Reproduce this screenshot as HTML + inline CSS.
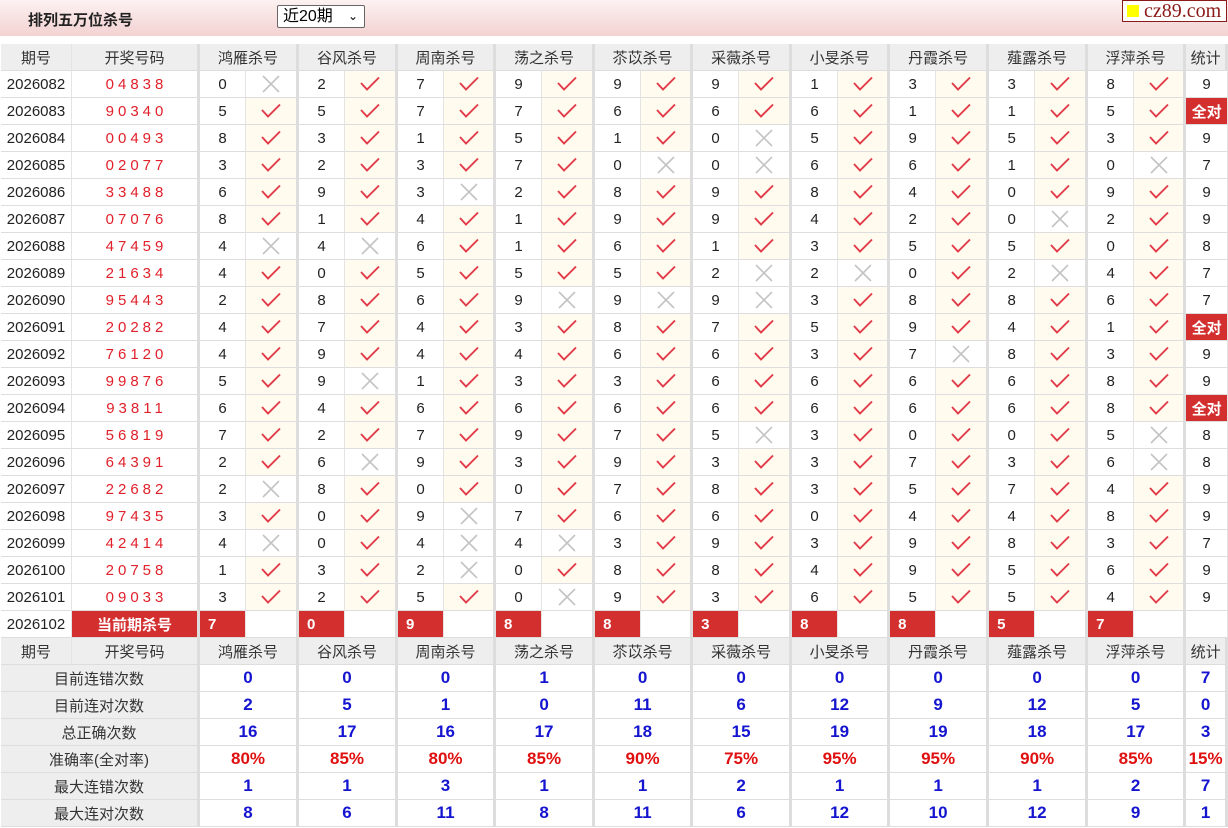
<!DOCTYPE html>
<html><head><meta charset="utf-8"><style>
body{margin:0;width:1228px;height:828px;overflow:hidden;background:#fff;font-family:"Liberation Sans","Noto Sans CJK SC",sans-serif;}
.hd{position:absolute;left:0;top:0;width:1228px;height:36px;background:linear-gradient(#fdf1f1,#f3d2d2);}
.tt{position:absolute;left:28px;top:9px;font-size:15px;font-weight:bold;color:#222;}
.sel{position:absolute;left:277px;top:5px;width:88px;height:23px;border:1px solid #666;border-radius:2px;background:#fff;font-size:16px;box-sizing:border-box;padding-left:5px;line-height:21px;}
.sel span{position:absolute;right:6px;top:0;font-size:12px;}
.logo{position:absolute;left:1122px;top:0;width:105px;height:22px;border:1px solid #8b1a1a;box-sizing:border-box;background:#fff;font-family:"Liberation Serif",serif;color:#8b1a1a;font-size:20px;line-height:20px;padding-left:21px;}
.logo i{position:absolute;left:4px;top:4px;width:12px;height:12px;background:#ff0;}
table{position:absolute;left:1px;top:44px;border-collapse:separate;border-spacing:0;table-layout:fixed;width:1227px;font-size:15px;color:#222;}
td{height:26px;border-bottom:1px solid #ddd;border-right:1px solid #e4e4e4;text-align:center;padding:0;white-space:nowrap;overflow:hidden;}
td:nth-child(even){border-right:3px solid #ddd;}
.h td{background:#eee;color:#333;}
td.d{color:#e0202a;letter-spacing:4px;padding-left:4px;}
td.c{background:#fffcef;}
svg{display:block;margin:auto;}
td.q{background:#d32f2f;color:#fff;font-weight:bold;}
td.rn{background:#d32f2f;color:#fff;font-weight:bold;text-align:left;padding-left:8px;}
td.t{background:#d32f2f;color:#fff;font-weight:bold;}
.st td{color:#1515d0;font-weight:bold;font-size:17px;border-right:3px solid #ddd;}
.st td.l{background:#eee;color:#333;font-weight:normal;font-size:15px;}
.st td.r{color:#e01010;}
.h2 td{border-right:3px solid #ddd;}
.h2 td.p{border-right:1px solid #e4e4e4;}
</style></head><body>
<svg width="0" height="0" style="position:absolute"><defs>
<symbol id="k" viewBox="0 0 22 18"><polyline points="2,8 8,14.5 20,2.5" fill="none" stroke="#e23a48" stroke-width="1.9"/></symbol>
<symbol id="x" viewBox="0 0 18 18"><path d="M1,1L17,17M17,1L1,17" stroke="#c4c4c4" stroke-width="1.6"/></symbol>
</defs></svg>
<div class="hd"><div class="tt">排列五万位杀号</div><div class="sel">近20期<span>&#8964;</span></div><div class="logo"><i></i>cz89.com</div></div>
<table>
<colgroup><col style="width:71px"><col style="width:128px"><col style="width:46px"><col style="width:53px"><col style="width:46px"><col style="width:53px"><col style="width:46px"><col style="width:52px"><col style="width:46px"><col style="width:53px"><col style="width:46px"><col style="width:52px"><col style="width:46px"><col style="width:53px"><col style="width:46px"><col style="width:52px"><col style="width:46px"><col style="width:53px"><col style="width:46px"><col style="width:53px"><col style="width:46px"><col style="width:52px"><col></colgroup>
<tr class="h h2"><td class="p">期号</td><td>开奖号码</td><td colspan="2">鸿雁杀号</td><td colspan="2">谷风杀号</td><td colspan="2">周南杀号</td><td colspan="2">荡之杀号</td><td colspan="2">苶苡杀号</td><td colspan="2">采薇杀号</td><td colspan="2">小旻杀号</td><td colspan="2">丹霞杀号</td><td colspan="2">薤露杀号</td><td colspan="2">浮萍杀号</td><td>统计</td></tr>
<tr><td>2026082</td><td class="d">04838</td><td>0</td><td><svg width="18" height="18"><use href="#x"/></svg></td><td>2</td><td class="c"><svg width="22" height="18"><use href="#k"/></svg></td><td>7</td><td class="c"><svg width="22" height="18"><use href="#k"/></svg></td><td>9</td><td class="c"><svg width="22" height="18"><use href="#k"/></svg></td><td>9</td><td class="c"><svg width="22" height="18"><use href="#k"/></svg></td><td>9</td><td class="c"><svg width="22" height="18"><use href="#k"/></svg></td><td>1</td><td class="c"><svg width="22" height="18"><use href="#k"/></svg></td><td>3</td><td class="c"><svg width="22" height="18"><use href="#k"/></svg></td><td>3</td><td class="c"><svg width="22" height="18"><use href="#k"/></svg></td><td>8</td><td class="c"><svg width="22" height="18"><use href="#k"/></svg></td><td>9</td></tr>
<tr><td>2026083</td><td class="d">90340</td><td>5</td><td class="c"><svg width="22" height="18"><use href="#k"/></svg></td><td>5</td><td class="c"><svg width="22" height="18"><use href="#k"/></svg></td><td>7</td><td class="c"><svg width="22" height="18"><use href="#k"/></svg></td><td>7</td><td class="c"><svg width="22" height="18"><use href="#k"/></svg></td><td>6</td><td class="c"><svg width="22" height="18"><use href="#k"/></svg></td><td>6</td><td class="c"><svg width="22" height="18"><use href="#k"/></svg></td><td>6</td><td class="c"><svg width="22" height="18"><use href="#k"/></svg></td><td>1</td><td class="c"><svg width="22" height="18"><use href="#k"/></svg></td><td>1</td><td class="c"><svg width="22" height="18"><use href="#k"/></svg></td><td>5</td><td class="c"><svg width="22" height="18"><use href="#k"/></svg></td><td class="t">全对</td></tr>
<tr><td>2026084</td><td class="d">00493</td><td>8</td><td class="c"><svg width="22" height="18"><use href="#k"/></svg></td><td>3</td><td class="c"><svg width="22" height="18"><use href="#k"/></svg></td><td>1</td><td class="c"><svg width="22" height="18"><use href="#k"/></svg></td><td>5</td><td class="c"><svg width="22" height="18"><use href="#k"/></svg></td><td>1</td><td class="c"><svg width="22" height="18"><use href="#k"/></svg></td><td>0</td><td><svg width="18" height="18"><use href="#x"/></svg></td><td>5</td><td class="c"><svg width="22" height="18"><use href="#k"/></svg></td><td>9</td><td class="c"><svg width="22" height="18"><use href="#k"/></svg></td><td>5</td><td class="c"><svg width="22" height="18"><use href="#k"/></svg></td><td>3</td><td class="c"><svg width="22" height="18"><use href="#k"/></svg></td><td>9</td></tr>
<tr><td>2026085</td><td class="d">02077</td><td>3</td><td class="c"><svg width="22" height="18"><use href="#k"/></svg></td><td>2</td><td class="c"><svg width="22" height="18"><use href="#k"/></svg></td><td>3</td><td class="c"><svg width="22" height="18"><use href="#k"/></svg></td><td>7</td><td class="c"><svg width="22" height="18"><use href="#k"/></svg></td><td>0</td><td><svg width="18" height="18"><use href="#x"/></svg></td><td>0</td><td><svg width="18" height="18"><use href="#x"/></svg></td><td>6</td><td class="c"><svg width="22" height="18"><use href="#k"/></svg></td><td>6</td><td class="c"><svg width="22" height="18"><use href="#k"/></svg></td><td>1</td><td class="c"><svg width="22" height="18"><use href="#k"/></svg></td><td>0</td><td><svg width="18" height="18"><use href="#x"/></svg></td><td>7</td></tr>
<tr><td>2026086</td><td class="d">33488</td><td>6</td><td class="c"><svg width="22" height="18"><use href="#k"/></svg></td><td>9</td><td class="c"><svg width="22" height="18"><use href="#k"/></svg></td><td>3</td><td><svg width="18" height="18"><use href="#x"/></svg></td><td>2</td><td class="c"><svg width="22" height="18"><use href="#k"/></svg></td><td>8</td><td class="c"><svg width="22" height="18"><use href="#k"/></svg></td><td>9</td><td class="c"><svg width="22" height="18"><use href="#k"/></svg></td><td>8</td><td class="c"><svg width="22" height="18"><use href="#k"/></svg></td><td>4</td><td class="c"><svg width="22" height="18"><use href="#k"/></svg></td><td>0</td><td class="c"><svg width="22" height="18"><use href="#k"/></svg></td><td>9</td><td class="c"><svg width="22" height="18"><use href="#k"/></svg></td><td>9</td></tr>
<tr><td>2026087</td><td class="d">07076</td><td>8</td><td class="c"><svg width="22" height="18"><use href="#k"/></svg></td><td>1</td><td class="c"><svg width="22" height="18"><use href="#k"/></svg></td><td>4</td><td class="c"><svg width="22" height="18"><use href="#k"/></svg></td><td>1</td><td class="c"><svg width="22" height="18"><use href="#k"/></svg></td><td>9</td><td class="c"><svg width="22" height="18"><use href="#k"/></svg></td><td>9</td><td class="c"><svg width="22" height="18"><use href="#k"/></svg></td><td>4</td><td class="c"><svg width="22" height="18"><use href="#k"/></svg></td><td>2</td><td class="c"><svg width="22" height="18"><use href="#k"/></svg></td><td>0</td><td><svg width="18" height="18"><use href="#x"/></svg></td><td>2</td><td class="c"><svg width="22" height="18"><use href="#k"/></svg></td><td>9</td></tr>
<tr><td>2026088</td><td class="d">47459</td><td>4</td><td><svg width="18" height="18"><use href="#x"/></svg></td><td>4</td><td><svg width="18" height="18"><use href="#x"/></svg></td><td>6</td><td class="c"><svg width="22" height="18"><use href="#k"/></svg></td><td>1</td><td class="c"><svg width="22" height="18"><use href="#k"/></svg></td><td>6</td><td class="c"><svg width="22" height="18"><use href="#k"/></svg></td><td>1</td><td class="c"><svg width="22" height="18"><use href="#k"/></svg></td><td>3</td><td class="c"><svg width="22" height="18"><use href="#k"/></svg></td><td>5</td><td class="c"><svg width="22" height="18"><use href="#k"/></svg></td><td>5</td><td class="c"><svg width="22" height="18"><use href="#k"/></svg></td><td>0</td><td class="c"><svg width="22" height="18"><use href="#k"/></svg></td><td>8</td></tr>
<tr><td>2026089</td><td class="d">21634</td><td>4</td><td class="c"><svg width="22" height="18"><use href="#k"/></svg></td><td>0</td><td class="c"><svg width="22" height="18"><use href="#k"/></svg></td><td>5</td><td class="c"><svg width="22" height="18"><use href="#k"/></svg></td><td>5</td><td class="c"><svg width="22" height="18"><use href="#k"/></svg></td><td>5</td><td class="c"><svg width="22" height="18"><use href="#k"/></svg></td><td>2</td><td><svg width="18" height="18"><use href="#x"/></svg></td><td>2</td><td><svg width="18" height="18"><use href="#x"/></svg></td><td>0</td><td class="c"><svg width="22" height="18"><use href="#k"/></svg></td><td>2</td><td><svg width="18" height="18"><use href="#x"/></svg></td><td>4</td><td class="c"><svg width="22" height="18"><use href="#k"/></svg></td><td>7</td></tr>
<tr><td>2026090</td><td class="d">95443</td><td>2</td><td class="c"><svg width="22" height="18"><use href="#k"/></svg></td><td>8</td><td class="c"><svg width="22" height="18"><use href="#k"/></svg></td><td>6</td><td class="c"><svg width="22" height="18"><use href="#k"/></svg></td><td>9</td><td><svg width="18" height="18"><use href="#x"/></svg></td><td>9</td><td><svg width="18" height="18"><use href="#x"/></svg></td><td>9</td><td><svg width="18" height="18"><use href="#x"/></svg></td><td>3</td><td class="c"><svg width="22" height="18"><use href="#k"/></svg></td><td>8</td><td class="c"><svg width="22" height="18"><use href="#k"/></svg></td><td>8</td><td class="c"><svg width="22" height="18"><use href="#k"/></svg></td><td>6</td><td class="c"><svg width="22" height="18"><use href="#k"/></svg></td><td>7</td></tr>
<tr><td>2026091</td><td class="d">20282</td><td>4</td><td class="c"><svg width="22" height="18"><use href="#k"/></svg></td><td>7</td><td class="c"><svg width="22" height="18"><use href="#k"/></svg></td><td>4</td><td class="c"><svg width="22" height="18"><use href="#k"/></svg></td><td>3</td><td class="c"><svg width="22" height="18"><use href="#k"/></svg></td><td>8</td><td class="c"><svg width="22" height="18"><use href="#k"/></svg></td><td>7</td><td class="c"><svg width="22" height="18"><use href="#k"/></svg></td><td>5</td><td class="c"><svg width="22" height="18"><use href="#k"/></svg></td><td>9</td><td class="c"><svg width="22" height="18"><use href="#k"/></svg></td><td>4</td><td class="c"><svg width="22" height="18"><use href="#k"/></svg></td><td>1</td><td class="c"><svg width="22" height="18"><use href="#k"/></svg></td><td class="t">全对</td></tr>
<tr><td>2026092</td><td class="d">76120</td><td>4</td><td class="c"><svg width="22" height="18"><use href="#k"/></svg></td><td>9</td><td class="c"><svg width="22" height="18"><use href="#k"/></svg></td><td>4</td><td class="c"><svg width="22" height="18"><use href="#k"/></svg></td><td>4</td><td class="c"><svg width="22" height="18"><use href="#k"/></svg></td><td>6</td><td class="c"><svg width="22" height="18"><use href="#k"/></svg></td><td>6</td><td class="c"><svg width="22" height="18"><use href="#k"/></svg></td><td>3</td><td class="c"><svg width="22" height="18"><use href="#k"/></svg></td><td>7</td><td><svg width="18" height="18"><use href="#x"/></svg></td><td>8</td><td class="c"><svg width="22" height="18"><use href="#k"/></svg></td><td>3</td><td class="c"><svg width="22" height="18"><use href="#k"/></svg></td><td>9</td></tr>
<tr><td>2026093</td><td class="d">99876</td><td>5</td><td class="c"><svg width="22" height="18"><use href="#k"/></svg></td><td>9</td><td><svg width="18" height="18"><use href="#x"/></svg></td><td>1</td><td class="c"><svg width="22" height="18"><use href="#k"/></svg></td><td>3</td><td class="c"><svg width="22" height="18"><use href="#k"/></svg></td><td>3</td><td class="c"><svg width="22" height="18"><use href="#k"/></svg></td><td>6</td><td class="c"><svg width="22" height="18"><use href="#k"/></svg></td><td>6</td><td class="c"><svg width="22" height="18"><use href="#k"/></svg></td><td>6</td><td class="c"><svg width="22" height="18"><use href="#k"/></svg></td><td>6</td><td class="c"><svg width="22" height="18"><use href="#k"/></svg></td><td>8</td><td class="c"><svg width="22" height="18"><use href="#k"/></svg></td><td>9</td></tr>
<tr><td>2026094</td><td class="d">93811</td><td>6</td><td class="c"><svg width="22" height="18"><use href="#k"/></svg></td><td>4</td><td class="c"><svg width="22" height="18"><use href="#k"/></svg></td><td>6</td><td class="c"><svg width="22" height="18"><use href="#k"/></svg></td><td>6</td><td class="c"><svg width="22" height="18"><use href="#k"/></svg></td><td>6</td><td class="c"><svg width="22" height="18"><use href="#k"/></svg></td><td>6</td><td class="c"><svg width="22" height="18"><use href="#k"/></svg></td><td>6</td><td class="c"><svg width="22" height="18"><use href="#k"/></svg></td><td>6</td><td class="c"><svg width="22" height="18"><use href="#k"/></svg></td><td>6</td><td class="c"><svg width="22" height="18"><use href="#k"/></svg></td><td>8</td><td class="c"><svg width="22" height="18"><use href="#k"/></svg></td><td class="t">全对</td></tr>
<tr><td>2026095</td><td class="d">56819</td><td>7</td><td class="c"><svg width="22" height="18"><use href="#k"/></svg></td><td>2</td><td class="c"><svg width="22" height="18"><use href="#k"/></svg></td><td>7</td><td class="c"><svg width="22" height="18"><use href="#k"/></svg></td><td>9</td><td class="c"><svg width="22" height="18"><use href="#k"/></svg></td><td>7</td><td class="c"><svg width="22" height="18"><use href="#k"/></svg></td><td>5</td><td><svg width="18" height="18"><use href="#x"/></svg></td><td>3</td><td class="c"><svg width="22" height="18"><use href="#k"/></svg></td><td>0</td><td class="c"><svg width="22" height="18"><use href="#k"/></svg></td><td>0</td><td class="c"><svg width="22" height="18"><use href="#k"/></svg></td><td>5</td><td><svg width="18" height="18"><use href="#x"/></svg></td><td>8</td></tr>
<tr><td>2026096</td><td class="d">64391</td><td>2</td><td class="c"><svg width="22" height="18"><use href="#k"/></svg></td><td>6</td><td><svg width="18" height="18"><use href="#x"/></svg></td><td>9</td><td class="c"><svg width="22" height="18"><use href="#k"/></svg></td><td>3</td><td class="c"><svg width="22" height="18"><use href="#k"/></svg></td><td>9</td><td class="c"><svg width="22" height="18"><use href="#k"/></svg></td><td>3</td><td class="c"><svg width="22" height="18"><use href="#k"/></svg></td><td>3</td><td class="c"><svg width="22" height="18"><use href="#k"/></svg></td><td>7</td><td class="c"><svg width="22" height="18"><use href="#k"/></svg></td><td>3</td><td class="c"><svg width="22" height="18"><use href="#k"/></svg></td><td>6</td><td><svg width="18" height="18"><use href="#x"/></svg></td><td>8</td></tr>
<tr><td>2026097</td><td class="d">22682</td><td>2</td><td><svg width="18" height="18"><use href="#x"/></svg></td><td>8</td><td class="c"><svg width="22" height="18"><use href="#k"/></svg></td><td>0</td><td class="c"><svg width="22" height="18"><use href="#k"/></svg></td><td>0</td><td class="c"><svg width="22" height="18"><use href="#k"/></svg></td><td>7</td><td class="c"><svg width="22" height="18"><use href="#k"/></svg></td><td>8</td><td class="c"><svg width="22" height="18"><use href="#k"/></svg></td><td>3</td><td class="c"><svg width="22" height="18"><use href="#k"/></svg></td><td>5</td><td class="c"><svg width="22" height="18"><use href="#k"/></svg></td><td>7</td><td class="c"><svg width="22" height="18"><use href="#k"/></svg></td><td>4</td><td class="c"><svg width="22" height="18"><use href="#k"/></svg></td><td>9</td></tr>
<tr><td>2026098</td><td class="d">97435</td><td>3</td><td class="c"><svg width="22" height="18"><use href="#k"/></svg></td><td>0</td><td class="c"><svg width="22" height="18"><use href="#k"/></svg></td><td>9</td><td><svg width="18" height="18"><use href="#x"/></svg></td><td>7</td><td class="c"><svg width="22" height="18"><use href="#k"/></svg></td><td>6</td><td class="c"><svg width="22" height="18"><use href="#k"/></svg></td><td>6</td><td class="c"><svg width="22" height="18"><use href="#k"/></svg></td><td>0</td><td class="c"><svg width="22" height="18"><use href="#k"/></svg></td><td>4</td><td class="c"><svg width="22" height="18"><use href="#k"/></svg></td><td>4</td><td class="c"><svg width="22" height="18"><use href="#k"/></svg></td><td>8</td><td class="c"><svg width="22" height="18"><use href="#k"/></svg></td><td>9</td></tr>
<tr><td>2026099</td><td class="d">42414</td><td>4</td><td><svg width="18" height="18"><use href="#x"/></svg></td><td>0</td><td class="c"><svg width="22" height="18"><use href="#k"/></svg></td><td>4</td><td><svg width="18" height="18"><use href="#x"/></svg></td><td>4</td><td><svg width="18" height="18"><use href="#x"/></svg></td><td>3</td><td class="c"><svg width="22" height="18"><use href="#k"/></svg></td><td>9</td><td class="c"><svg width="22" height="18"><use href="#k"/></svg></td><td>3</td><td class="c"><svg width="22" height="18"><use href="#k"/></svg></td><td>9</td><td class="c"><svg width="22" height="18"><use href="#k"/></svg></td><td>8</td><td class="c"><svg width="22" height="18"><use href="#k"/></svg></td><td>3</td><td class="c"><svg width="22" height="18"><use href="#k"/></svg></td><td>7</td></tr>
<tr><td>2026100</td><td class="d">20758</td><td>1</td><td class="c"><svg width="22" height="18"><use href="#k"/></svg></td><td>3</td><td class="c"><svg width="22" height="18"><use href="#k"/></svg></td><td>2</td><td><svg width="18" height="18"><use href="#x"/></svg></td><td>0</td><td class="c"><svg width="22" height="18"><use href="#k"/></svg></td><td>8</td><td class="c"><svg width="22" height="18"><use href="#k"/></svg></td><td>8</td><td class="c"><svg width="22" height="18"><use href="#k"/></svg></td><td>4</td><td class="c"><svg width="22" height="18"><use href="#k"/></svg></td><td>9</td><td class="c"><svg width="22" height="18"><use href="#k"/></svg></td><td>5</td><td class="c"><svg width="22" height="18"><use href="#k"/></svg></td><td>6</td><td class="c"><svg width="22" height="18"><use href="#k"/></svg></td><td>9</td></tr>
<tr><td>2026101</td><td class="d">09033</td><td>3</td><td class="c"><svg width="22" height="18"><use href="#k"/></svg></td><td>2</td><td class="c"><svg width="22" height="18"><use href="#k"/></svg></td><td>5</td><td class="c"><svg width="22" height="18"><use href="#k"/></svg></td><td>0</td><td><svg width="18" height="18"><use href="#x"/></svg></td><td>9</td><td class="c"><svg width="22" height="18"><use href="#k"/></svg></td><td>3</td><td class="c"><svg width="22" height="18"><use href="#k"/></svg></td><td>6</td><td class="c"><svg width="22" height="18"><use href="#k"/></svg></td><td>5</td><td class="c"><svg width="22" height="18"><use href="#k"/></svg></td><td>5</td><td class="c"><svg width="22" height="18"><use href="#k"/></svg></td><td>4</td><td class="c"><svg width="22" height="18"><use href="#k"/></svg></td><td>9</td></tr>
<tr><td>2026102</td><td class="q">当前期杀号</td><td class="rn">7</td><td></td><td class="rn">0</td><td></td><td class="rn">9</td><td></td><td class="rn">8</td><td></td><td class="rn">8</td><td></td><td class="rn">3</td><td></td><td class="rn">8</td><td></td><td class="rn">8</td><td></td><td class="rn">5</td><td></td><td class="rn">7</td><td></td><td></td></tr>
<tr class="h h2"><td class="p">期号</td><td>开奖号码</td><td colspan="2">鸿雁杀号</td><td colspan="2">谷风杀号</td><td colspan="2">周南杀号</td><td colspan="2">荡之杀号</td><td colspan="2">苶苡杀号</td><td colspan="2">采薇杀号</td><td colspan="2">小旻杀号</td><td colspan="2">丹霞杀号</td><td colspan="2">薤露杀号</td><td colspan="2">浮萍杀号</td><td>统计</td></tr>
<tr class="st"><td class="l" colspan="2">目前连错次数</td><td colspan="2">0</td><td colspan="2">0</td><td colspan="2">0</td><td colspan="2">1</td><td colspan="2">0</td><td colspan="2">0</td><td colspan="2">0</td><td colspan="2">0</td><td colspan="2">0</td><td colspan="2">0</td><td>7</td></tr>
<tr class="st"><td class="l" colspan="2">目前连对次数</td><td colspan="2">2</td><td colspan="2">5</td><td colspan="2">1</td><td colspan="2">0</td><td colspan="2">11</td><td colspan="2">6</td><td colspan="2">12</td><td colspan="2">9</td><td colspan="2">12</td><td colspan="2">5</td><td>0</td></tr>
<tr class="st"><td class="l" colspan="2">总正确次数</td><td colspan="2">16</td><td colspan="2">17</td><td colspan="2">16</td><td colspan="2">17</td><td colspan="2">18</td><td colspan="2">15</td><td colspan="2">19</td><td colspan="2">19</td><td colspan="2">18</td><td colspan="2">17</td><td>3</td></tr>
<tr class="st"><td class="l" colspan="2">准确率(全对率)</td><td class="r" colspan="2">80%</td><td class="r" colspan="2">85%</td><td class="r" colspan="2">80%</td><td class="r" colspan="2">85%</td><td class="r" colspan="2">90%</td><td class="r" colspan="2">75%</td><td class="r" colspan="2">95%</td><td class="r" colspan="2">95%</td><td class="r" colspan="2">90%</td><td class="r" colspan="2">85%</td><td class="r">15%</td></tr>
<tr class="st"><td class="l" colspan="2">最大连错次数</td><td colspan="2">1</td><td colspan="2">1</td><td colspan="2">3</td><td colspan="2">1</td><td colspan="2">1</td><td colspan="2">2</td><td colspan="2">1</td><td colspan="2">1</td><td colspan="2">1</td><td colspan="2">2</td><td>7</td></tr>
<tr class="st"><td class="l" colspan="2">最大连对次数</td><td colspan="2">8</td><td colspan="2">6</td><td colspan="2">11</td><td colspan="2">8</td><td colspan="2">11</td><td colspan="2">6</td><td colspan="2">12</td><td colspan="2">10</td><td colspan="2">12</td><td colspan="2">9</td><td>1</td></tr>
</table>
</body></html>
